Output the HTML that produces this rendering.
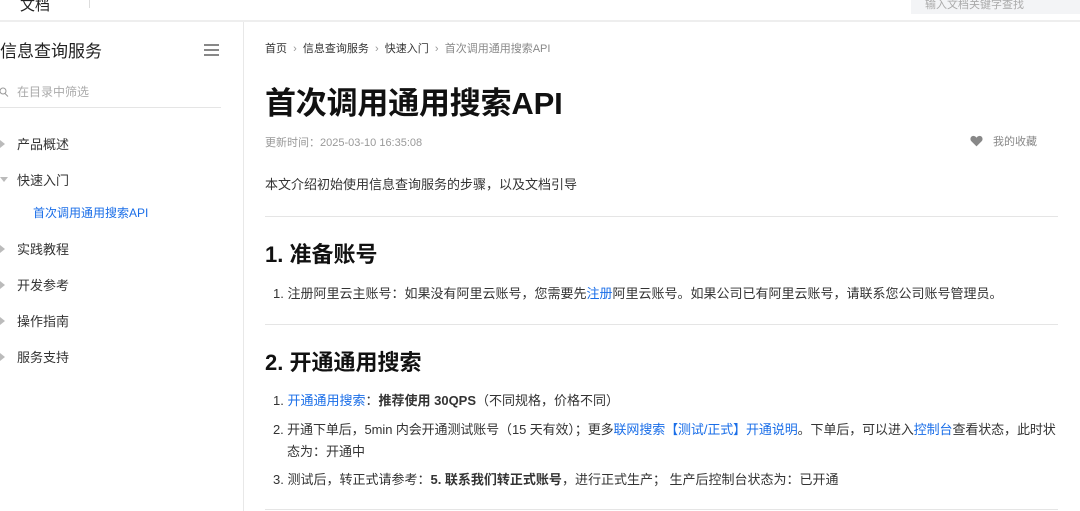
<!DOCTYPE html>
<html><head><meta charset="utf-8"><style>
*{margin:0;padding:0;box-sizing:border-box}
body{width:1080px;height:511px;overflow:hidden;background:#fff;font-family:"Liberation Sans","Noto Sans CJK SC",sans-serif;color:#333;position:relative}
.a{position:absolute;white-space:nowrap}
a{color:#1a6ee8;text-decoration:none}
.hr{position:absolute;height:1px;background:#e5e5e5}
</style></head><body>
<div class="a" style="left:20px;top:-6px;font-size:15px;color:#222">文档</div>
<div class="a" style="left:89px;top:0;width:1px;height:8px;background:#ddd"></div>
<div class="a" style="left:911px;top:0;width:169px;height:14px;background:#f3f4f6"></div>
<div class="a" style="left:925px;top:-4px;font-size:11px;color:#aaa">输入文档关键字查找</div>
<div class="a" style="left:0;top:20px;width:1080px;height:2px;background:#eee"></div>
<div class="a" style="left:243px;top:22px;width:1px;height:489px;background:#e8e8e8"></div>

<div class="a" style="left:0;top:37px;font-size:17px;color:#222">信息查询服务</div>
<div class="a" style="left:204px;top:44px;width:15px;height:1.5px;background:#888;box-shadow:0 5px 0 #888,0 10px 0 #888"></div>
<svg class="a" style="left:0;top:87px" width="9" height="10"><circle cx="3" cy="4" r="3" fill="none" stroke="#999" stroke-width="1"/><line x1="5" y1="6.5" x2="8" y2="9.5" stroke="#999"/></svg>
<div class="a" style="left:17px;top:83px;font-size:12px;color:#aaa">在目录中筛选</div>
<div class="hr" style="left:0;top:107px;width:221px"></div>
<div class="a" style="left:0;top:140px;width:0;height:0;border-left:5px solid #bbb;border-top:4px solid transparent;border-bottom:4px solid transparent"></div>
<div class="a" style="left:17px;top:134px;font-size:13px">产品概述</div>
<div class="a" style="left:0;top:177px;width:0;height:0;border-top:5px solid #bbb;border-left:4px solid transparent;border-right:4px solid transparent"></div>
<div class="a" style="left:17px;top:170px;font-size:13px">快速入门</div>
<div class="a" style="left:33px;top:204px;font-size:12px;color:#1a6ee8">首次调用通用搜索API</div>
<div class="a" style="left:0;top:245px;width:0;height:0;border-left:5px solid #bbb;border-top:4px solid transparent;border-bottom:4px solid transparent"></div>
<div class="a" style="left:17px;top:239px;font-size:13px">实践教程</div>
<div class="a" style="left:0;top:281px;width:0;height:0;border-left:5px solid #bbb;border-top:4px solid transparent;border-bottom:4px solid transparent"></div>
<div class="a" style="left:17px;top:275px;font-size:13px">开发参考</div>
<div class="a" style="left:0;top:317px;width:0;height:0;border-left:5px solid #bbb;border-top:4px solid transparent;border-bottom:4px solid transparent"></div>
<div class="a" style="left:17px;top:311px;font-size:13px">操作指南</div>
<div class="a" style="left:0;top:353px;width:0;height:0;border-left:5px solid #bbb;border-top:4px solid transparent;border-bottom:4px solid transparent"></div>
<div class="a" style="left:17px;top:347px;font-size:13px">服务支持</div>

<div class="a" style="left:265px;top:40px;font-size:11px;color:#333">首页 <span style="color:#999">&nbsp;›&nbsp;</span> 信息查询服务 <span style="color:#999">&nbsp;›&nbsp;</span> 快速入门 <span style="color:#999">&nbsp;›&nbsp;</span> <span style="color:#888">首次调用通用搜索API</span></div>
<div class="a" style="left:265px;top:78px;font-size:31px;font-weight:bold;color:#111;letter-spacing:-0.2px">首次调用通用搜索API</div>
<div class="a" style="left:265px;top:134px;font-size:11px;color:#999">更新时间：2025-03-10 16:35:08</div>
<svg class="a" style="left:970px;top:135px" width="13" height="12" viewBox="0 0 24 22"><path d="M12 21L2.5 11.5C-0.5 8.5 0.5 2 6 1.5C9 1.3 11 3.5 12 5C13 3.5 15 1.3 18 1.5C23.5 2 24.5 8.5 21.5 11.5Z" fill="#888"/></svg>
<div class="a" style="left:993px;top:133px;font-size:11px;color:#888">我的收藏</div>
<div class="a" style="left:265px;top:174px;font-size:13px">本文介绍初始使用信息查询服务的步骤，以及文档引导</div>
<div class="hr" style="left:265px;top:216px;width:793px"></div>
<div class="a" style="left:265px;top:237px;font-size:22px;font-weight:bold;color:#111">1. 准备账号</div>
<div class="a" style="left:273px;top:283px;font-size:13px">1. 注册阿里云主账号：如果没有阿里云账号，您需要先<a>注册</a>阿里云账号。如果公司已有阿里云账号，请联系您公司账号管理员。</div>
<div class="hr" style="left:265px;top:324px;width:793px"></div>
<div class="a" style="left:265px;top:345px;font-size:22px;font-weight:bold;color:#111">2. 开通通用搜索</div>
<div class="a" style="left:273px;top:390px;font-size:13px">1. <a>开通通用搜索</a>：<b>推荐使用 30QPS</b>（不同规格，价格不同）</div>
<div class="a" style="left:273px;top:419px;font-size:13px;letter-spacing:-0.1px">2. 开通下单后，5min 内会开通测试账号（15 天有效）；更多<a>联网搜索【测试/正式】开通说明</a>。下单后，可以进入<a>控制台</a>查看状态，此时状</div>
<div class="a" style="left:287px;top:441px;font-size:13px">态为：开通中</div>
<div class="a" style="left:273px;top:469px;font-size:13px">3. 测试后，转正式请参考：<b>5. 联系我们转正式账号</b>，进行正式生产； 生产后控制台状态为：已开通</div>
<div class="hr" style="left:265px;top:509px;width:793px"></div>
</body></html>
